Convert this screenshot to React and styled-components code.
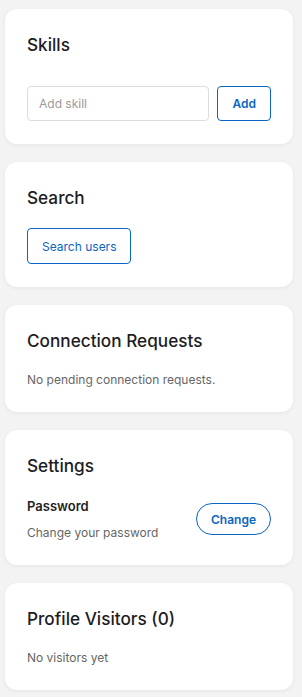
import React from "react";
import styled, { createGlobalStyle } from "styled-components";

const Global = createGlobalStyle`
  * { box-sizing: border-box; }
  html, body { margin: 0; padding: 0; background: #f3f3f3; }
  body { font-family: Inter, "Noto Sans", sans-serif; color: #1f1f1f; }
`;

const Page = styled.div`
  display: flex;
  flex-direction: column;
  gap: 18px;
  padding: 9px 9px 6px 5px;
`;

const Card = styled.section`
  background: #fff;
  border-radius: 12px;
  padding: 22px 22px 23px;
  box-shadow: 0 1px 4px rgba(0, 0, 0, 0.06);
`;

const Heading = styled.h2`
  margin: 0 0 ${(p) => (p.$flush ? 0 : 16)}px;
  font-size: 17.2px;
  line-height: 28px;
  font-weight: 500;
  color: #1d1d1f;
`;

const FormRow = styled.div`
  display: flex;
  gap: 8px;
  margin-top: 27px;
`;

const Input = styled.input`
  flex: 1;
  min-width: 0;
  height: 35px;
  border: 1px solid #dcdcdc;
  border-radius: 4px;
  padding: 0 11px;
  font: inherit;
  font-size: 12px;
  color: #333;
  &::placeholder { color: #9a9a9a; }
`;

const OutlineButton = styled.button`
  height: ${(p) => p.$h || 36}px;
  padding: 0 14px;
  border: 1px solid #0a66c2;
  border-radius: ${(p) => (p.$pill ? "16px" : "4px")};
  background: #fff;
  color: #0a66c2;
  font-family: inherit;
  font-size: 12px;
  font-weight: ${(p) => p.$weight || 600};
  cursor: pointer;
`;

const Muted = styled.p`
  margin: 0;
  font-size: 12px;
  line-height: 18px;
  color: #666;
`;

const SettingRow = styled.div`
  display: flex;
  align-items: center;
  justify-content: space-between;
  margin-top: 16px;
`;

const SettingText = styled.div`
  display: flex;
  flex-direction: column;
  gap: 8px;
`;

const SettingLabel = styled.div`
  font-size: 13px;
  line-height: 20px;
  font-weight: 600;
  color: #1f1f1f;
`;

export default function App() {
  return (
    <>
      <Global />
      <Page>
        <Card>
          <Heading $flush>Skills</Heading>
          <FormRow>
            <Input placeholder="Add skill" />
            <OutlineButton $h={35}>Add</OutlineButton>
          </FormRow>
        </Card>
        <Card>
          <Heading>Search</Heading>
          <OutlineButton $weight={400}>Search users</OutlineButton>
        </Card>
        <Card>
          <Heading>Connection Requests</Heading>
          <Muted>No pending connection requests.</Muted>
        </Card>
        <Card>
          <Heading $flush>Settings</Heading>
          <SettingRow>
            <SettingText>
              <SettingLabel>Password</SettingLabel>
              <Muted>Change your password</Muted>
            </SettingText>
            <OutlineButton $pill $h={32}>Change</OutlineButton>
          </SettingRow>
        </Card>
        <Card>
          <Heading>Profile Visitors (0)</Heading>
          <Muted>No visitors yet</Muted>
        </Card>
      </Page>
    </>
  );
}
